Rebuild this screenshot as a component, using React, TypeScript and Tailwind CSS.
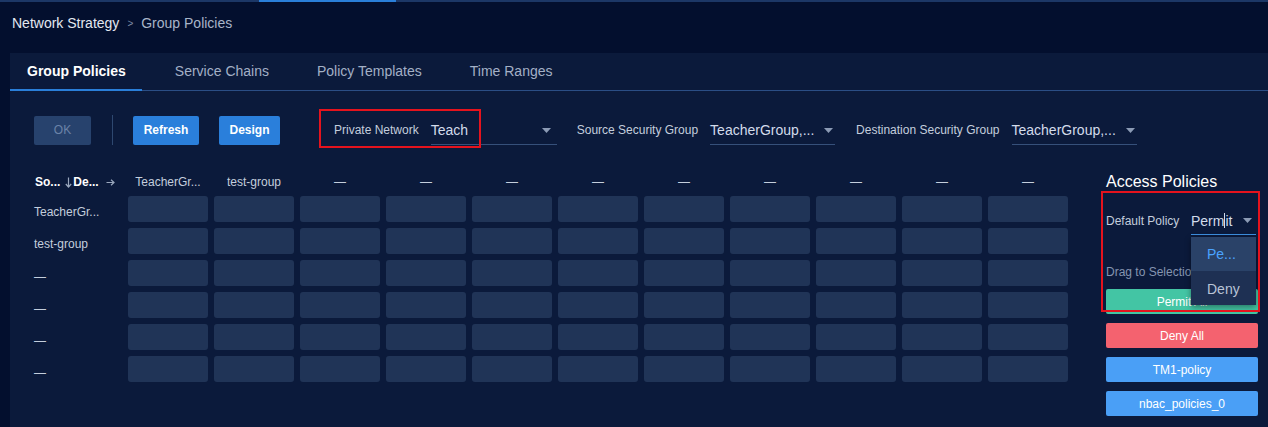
import React from "react";

const Caret = ({ color = "#8c9bb5" }: { color?: string }) => (
  <svg width="9" height="5" viewBox="0 0 9 5" className="shrink-0">
    <path d="M0 0 L9 0 L4.5 5 Z" fill={color} />
  </svg>
);

const DownArrow = () => (
  <svg width="7" height="11" viewBox="0 0 7 11" className="shrink-0">
    <path d="M3.5 0.5 V10 M0.8 7 L3.5 10 L6.2 7" stroke="#9aa7bd" strokeWidth="1.2" fill="none" />
  </svg>
);

const RightArrow = () => (
  <svg width="9" height="7" viewBox="0 0 9 7" className="shrink-0">
    <path d="M0.5 3.5 H8 M5 0.8 L8 3.5 L5 6.2" stroke="#9aa7bd" strokeWidth="1.2" fill="none" />
  </svg>
);

const Select = ({ value, width, caretRight = 6 }: { value: string; width: number; caretRight?: number }) => (
  <div
    className="flex items-center justify-between h-[30px] border-b border-[#36507a] pt-[1px]"
    style={{ width, paddingRight: caretRight }}
  >
    <span className="text-[14px] text-[#d3dceb] leading-none">{value}</span>
    <Caret />
  </div>
);

const cols = ["TeacherGr...", "test-group", "—", "—", "—", "—", "—", "—", "—", "—", "—"];
const rows = ["TeacherGr...", "test-group", "—", "—", "—", "—"];

export default function App() {
  return (
    <div
      className="w-[1268px] h-[427px] overflow-hidden bg-[#030f2e] flex flex-col"
      style={{ fontFamily: '"Liberation Sans", Arial, sans-serif' }}
    >
      {/* top line */}
      <div className="h-[2px] bg-[#1c3766] flex shrink-0">
        <div className="ml-[259px] w-[137px] bg-[#2a7fd9]" />
      </div>

      {/* breadcrumb */}
      <div className="h-[40px] flex items-center px-[12px] gap-[8px] shrink-0 pt-[2px]">
        <span className="text-[14px] text-[#e3e8f1]">Network Strategy</span>
        <span className="text-[10px] text-[#7d8ca6]">&gt;</span>
        <span className="text-[14px] text-[#a9b5c9]">Group Policies</span>
      </div>

      {/* panel */}
      <div className="mt-[11px] ml-[10px] flex-1 bg-[#0b1a3b] flex flex-col">
        {/* tabs */}
        <div className="h-[38px] flex border-b border-[#2b4e85] shrink-0">
          <div className="h-[38px] -mb-px flex items-center px-[17px] pr-[16px] border-b-2 border-[#2a7fd9] text-[14px] font-bold text-white">
            Group Policies
          </div>
          <div className="flex items-center px-[16px] ml-[17px] text-[14px] text-[#a3b0c6]">Service Chains</div>
          <div className="flex items-center px-[16px] ml-[16px] text-[14px] text-[#a3b0c6]">Policy Templates</div>
          <div className="flex items-center px-[16px] ml-[16px] text-[14px] text-[#a3b0c6]">Time Ranges</div>
        </div>

        {/* toolbar */}
        <div className="flex items-center pl-[24px] mt-[24px] h-[30px] shrink-0">
          <div className="w-[57px] h-[29px] rounded-[2px] bg-[#27426d] flex items-center justify-center text-[12px] text-[#6b83a8]">
            OK
          </div>
          <div className="ml-[21px] w-px h-[30px] bg-[#2e4870]" />
          <div className="ml-[20px] w-[66px] h-[29px] rounded-[2px] bg-[#2a7fdb] flex items-center justify-center text-[12px] font-bold text-white">
            Refresh
          </div>
          <div className="ml-[20px] w-[61px] h-[29px] rounded-[2px] bg-[#2a7fdb] flex items-center justify-center text-[12px] font-bold text-white">
            Design
          </div>
          <div className="relative ml-[54px] flex items-center">
            <span className="text-[12px] text-[#c4cedd]">Private Network</span>
            <div className="ml-[12px]">
              <Select value="Teach" width={126} caretRight={6} />
            </div>
            <div className="absolute left-[-15px] top-[-6px] w-[162px] h-[39px] border-2 border-[#e5131d] pointer-events-none" />
          </div>
          <div className="ml-[20px] flex items-center">
            <span className="text-[12px] text-[#c4cedd]">Source Security Group</span>
            <div className="ml-[12px]">
              <Select value="TeacherGroup,..." width={125} caretRight={2} />
            </div>
          </div>
          <div className="ml-[21px] flex items-center">
            <span className="text-[12px] text-[#c4cedd]">Destination Security Group</span>
            <div className="ml-[12px]">
              <Select value="TeacherGroup,..." width={125} caretRight={2} />
            </div>
          </div>
        </div>

        {/* body */}
        <div className="flex mt-[25px]">
          {/* matrix */}
          <div className="pl-[24px] flex flex-col">
            <div className="flex h-[22px] items-center pt-[2px]">
              <div className="w-[94px] flex items-center text-[12px]">
                <span className="font-bold text-white ml-[1px]">So...</span>
                <span className="ml-[5px] mr-[1px] flex items-center"><DownArrow /></span>
                <span className="font-bold text-white">De...</span>
                <span className="ml-[7px] flex items-center"><RightArrow /></span>
              </div>
              <div className="flex gap-[6px]">
                {cols.map((c, i) => (
                  <div key={i} className="w-[80px] text-center text-[12px] text-[#c4cedd] whitespace-nowrap">
                    {c}
                  </div>
                ))}
              </div>
            </div>
            <div className="flex flex-col gap-[6px] mt-[4px]">
              {rows.map((r, ri) => (
                <div key={ri} className="flex h-[26px] items-center">
                  <div
                    className={
                      ri < 2
                        ? "w-[94px] text-[12px] text-[#c4cedd] whitespace-nowrap pt-[5px]"
                        : "w-[94px] text-[12px] text-[#c4cedd] whitespace-nowrap pt-[7px]"
                    }
                  >
                    {r}
                  </div>
                  <div className="flex gap-[6px]">
                    {cols.map((_, ci) => (
                      <div key={ci} className="w-[80px] h-[26px] rounded-[3px] bg-[#203457]" />
                    ))}
                  </div>
                </div>
              ))}
            </div>
          </div>

          {/* right panel */}
          <div className="relative ml-[38px] w-[152px] flex flex-col">
            <div className="h-[22px] flex items-center text-[16px] text-white pt-[1px]">Access Policies</div>
            <div className="mt-[13px] flex items-center h-[30px]">
              <span className="text-[12px] text-[#c4cedd] w-[85px] pt-[1px]">Default Policy</span>
              <div className="flex items-center justify-between w-[65px] h-[30px] border-b border-[#3d8fe0] pr-[4px] pt-[2px]">
                <span className="flex items-center text-[14px] text-[#d3dceb] leading-none">
                  Perm<span className="w-px h-[15px] bg-[#d3dceb]" />it
                </span>
                <Caret />
              </div>
            </div>
            <div className="mt-[29px] text-[12px] text-[#8595b0] whitespace-nowrap leading-[16px]">
              Drag to Selection Area
            </div>
            <div className="mt-[9px] flex flex-col gap-[9px]">
              <div className="h-[25px] rounded-[2px] bg-[#43c5a4] flex items-center justify-center text-[12px] text-white">
                Permit All
              </div>
              <div className="h-[25px] rounded-[2px] bg-[#f4626f] flex items-center justify-center text-[12px] text-white">
                Deny All
              </div>
              <div className="h-[25px] rounded-[2px] bg-[#4a9ff6] flex items-center justify-center text-[12px] text-white">
                TM1-policy
              </div>
              <div className="h-[25px] rounded-[2px] bg-[#4a9ff6] flex items-center justify-center text-[12px] text-white">
                nbac_policies_0
              </div>
            </div>

            {/* dropdown */}
            <div className="absolute left-[85px] top-[67px] w-[65px] h-[68px] bg-[#1e3053] shadow-[0_2px_6px_rgba(0,0,0,0.4)] flex flex-col z-10">
              <div className="h-[34px] bg-[#2a4268] flex items-center pl-[16px] text-[14px] text-[#4aa3ff]">Pe...</div>
              <div className="h-[34px] flex items-center pl-[16px] pt-[2px] text-[14px] text-[#b9c4d7]">Deny</div>
            </div>
            {/* annotation box */}
            <div className="absolute left-[-5px] top-[21px] w-[159px] h-[121px] border-2 border-[#e5131d] z-20 pointer-events-none" />
          </div>
        </div>
      </div>
    </div>
  );
}
